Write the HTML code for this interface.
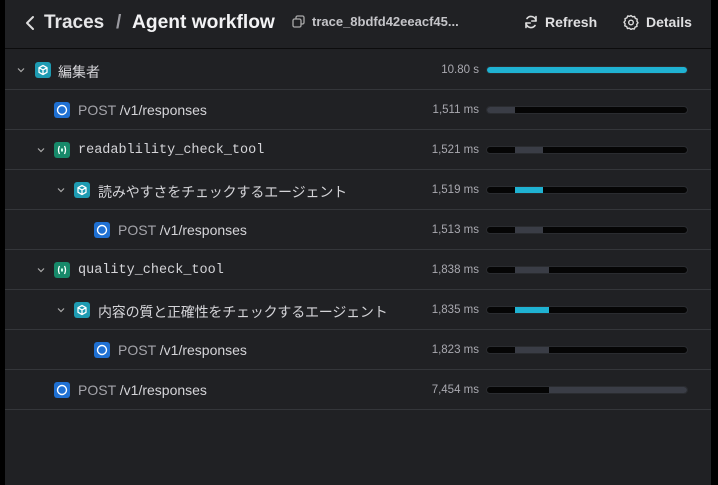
<!DOCTYPE html>
<html><head><meta charset="utf-8"><style>
*{margin:0;padding:0;box-sizing:border-box}
body{width:718px;height:485px;background:#000;overflow:hidden;font-family:"Liberation Sans","Noto Sans CJK JP",sans-serif;position:relative}
.panel{position:absolute;left:5px;top:0;width:706px;height:485px;background:#202124}
.hdr{position:absolute;left:0;top:0;width:706px;height:49px;border-bottom:1px solid #0c0c0d}
.abs{position:absolute;white-space:nowrap}
.row{position:absolute;left:0;width:706px;height:40px;border-bottom:1px solid #34363a}
.chev{position:absolute;top:15px;width:10px;height:10px}
.ic{position:absolute;top:12px;width:16px;height:16px;border-radius:3px}
.lbl{position:absolute;top:12px;font-size:14px;color:#d4d4d8;white-space:nowrap}
.mono{font-family:"Liberation Mono",monospace;font-size:13.5px;top:13px}
.dur{position:absolute;right:232px;top:14px;font-size:11.5px;color:#a9a9b0}
.bar{position:absolute;left:481px;top:16px;width:202px;height:8px;background:#050505;border-radius:4px;overflow:hidden;border:1px solid #2a2c30}
.seg{position:absolute;top:0;height:100%;background:#3a3d46}
.cy{background:#1fb2d2}
</style></head><body>
<div class="panel">
<div class="hdr">
 <svg class="abs" style="left:20px;top:15px" width="10" height="16" viewBox="0 0 10 16"><path d="M8 2L2 8l6 6" stroke="#ddd" stroke-width="2" fill="none" stroke-linecap="round" stroke-linejoin="round"/></svg>
 <div class="abs" style="left:39px;top:12px;font-size:19px;font-weight:bold;color:#e6e6e8">Traces</div>
 <div class="abs" style="left:111px;top:12px;font-size:19px;font-weight:bold;color:#9a9aa0">/</div>
 <div class="abs" style="left:127px;top:12px;font-size:19.2px;font-weight:bold;color:#f2f2f4">Agent workflow</div>
 <svg class="abs" style="left:287px;top:15px" width="13" height="13" viewBox="0 0 13 13"><rect x="1" y="4" width="8" height="8" rx="1.5" stroke="#aaa" stroke-width="1.3" fill="none"/><path d="M4 4V2.5A1.5 1.5 0 0 1 5.5 1h5A1.5 1.5 0 0 1 12 2.5v5A1.5 1.5 0 0 1 10.5 9H9" stroke="#aaa" stroke-width="1.3" fill="none"/></svg>
 <div class="abs" style="left:307px;top:14px;font-size:13px;font-weight:bold;color:#c4c4c8">trace_8bdfd42eeacf45...</div>
 <svg class="abs" style="left:519px;top:15px" width="14" height="14" viewBox="0 0 14 14"><path d="M12 6A5 5 0 0 0 3 3.5M2 8a5 5 0 0 0 9 2.5" stroke="#ddd" stroke-width="1.6" fill="none" stroke-linecap="round"/><path d="M12 1.5V6H7.8M2 12.5V8h4.2" stroke="#ddd" stroke-width="1.6" fill="none" stroke-linecap="round" stroke-linejoin="round"/></svg>
 <div class="abs" style="left:540px;top:14px;font-size:14px;font-weight:bold;color:#e0e0e2">Refresh</div>
 <svg class="abs" style="left:618px;top:14px" width="16" height="16" viewBox="0 0 16 16"><path d="M8 1.5l1.6 1.3 2-.3.7 1.9 1.9.8-.3 2L15 8.8l-1.3 1.6.3 2-1.9.7-.8 1.9-2-.3L8 15.5l-1.6-1.3-2 .3-.7-1.9-1.9-.8.3-2L1 8.2l1.3-1.6-.3-2 1.9-.7.8-1.9 2 .3z" stroke="#ddd" stroke-width="1.4" fill="none" stroke-linejoin="round"/><circle cx="8" cy="8.5" r="2.3" stroke="#ddd" stroke-width="1.4" fill="none"/></svg>
 <div class="abs" style="left:641px;top:14px;font-size:14px;font-weight:bold;color:#e0e0e2">Details</div>
</div>

<div class="row" style="top:50px">
 <svg class="chev" style="left:11px" viewBox="0 0 10 10"><path d="M2 3.5l3 3 3-3" stroke="#aaa" stroke-width="1.2" fill="none"/></svg>
 <div class="ic" style="left:30px;background:#1e9bb2"><svg width="16" height="16" viewBox="0 0 16 16"><path d="M8 3.5l4 2.2v4.6L8 12.5 4 10.3V5.7zM4 5.7l4 2.2 4-2.2M8 7.9v4.6" stroke="#fff" stroke-width="1.3" fill="none" stroke-linejoin="round"/></svg></div>
 <div class="lbl" style="left:53px">編集者</div>
 <div class="dur">10.80 s</div>
 <div class="bar"><div class="seg cy" style="left:0;width:100%"></div></div>
</div>
<div class="row" style="top:90px">
 <div class="ic" style="left:49px;background:#1f70d2"><svg width="16" height="16" viewBox="0 0 16 16"><circle cx="8" cy="8" r="4.5" stroke="#fff" stroke-width="1.4" fill="none"/></svg></div>
 <div class="lbl" style="left:73px"><span style="color:#a4a4aa">POST</span> /v1/responses</div>
 <div class="dur">1,511 ms</div>
 <div class="bar"><div class="seg" style="left:0;width:28px"></div></div>
</div>
<div class="row" style="top:130px">
 <svg class="chev" style="left:31px" viewBox="0 0 10 10"><path d="M2 3.5l3 3 3-3" stroke="#aaa" stroke-width="1.2" fill="none"/></svg>
 <div class="ic" style="left:49px;background:#17896a"><svg width="16" height="16" viewBox="0 0 16 16"><path d="M5.5 4Q3.5 8 5.5 12M10.5 4q2 4 0 8" stroke="#fff" stroke-width="1.3" fill="none"/><rect x="7" y="6.5" width="2" height="3" fill="#cfe"/></svg></div>
 <div class="lbl mono" style="left:73px">readablility_check_tool</div>
 <div class="dur">1,521 ms</div>
 <div class="bar"><div class="seg" style="left:28px;width:28px"></div></div>
</div>
<div class="row" style="top:170px">
 <svg class="chev" style="left:51px" viewBox="0 0 10 10"><path d="M2 3.5l3 3 3-3" stroke="#aaa" stroke-width="1.2" fill="none"/></svg>
 <div class="ic" style="left:69px;background:#1e9bb2"><svg width="16" height="16" viewBox="0 0 16 16"><path d="M8 3.5l4 2.2v4.6L8 12.5 4 10.3V5.7zM4 5.7l4 2.2 4-2.2M8 7.9v4.6" stroke="#fff" stroke-width="1.3" fill="none" stroke-linejoin="round"/></svg></div>
 <div class="lbl" style="left:93px;letter-spacing:-0.15px">読みやすさをチェックするエージェント</div>
 <div class="dur">1,519 ms</div>
 <div class="bar"><div class="seg cy" style="left:28px;width:28px"></div></div>
</div>
<div class="row" style="top:210px">
 <div class="ic" style="left:89px;background:#1f70d2"><svg width="16" height="16" viewBox="0 0 16 16"><circle cx="8" cy="8" r="4.5" stroke="#fff" stroke-width="1.4" fill="none"/></svg></div>
 <div class="lbl" style="left:113px"><span style="color:#a4a4aa">POST</span> /v1/responses</div>
 <div class="dur">1,513 ms</div>
 <div class="bar"><div class="seg" style="left:28px;width:28px"></div></div>
</div>
<div class="row" style="top:250px">
 <svg class="chev" style="left:31px" viewBox="0 0 10 10"><path d="M2 3.5l3 3 3-3" stroke="#aaa" stroke-width="1.2" fill="none"/></svg>
 <div class="ic" style="left:49px;background:#17896a"><svg width="16" height="16" viewBox="0 0 16 16"><path d="M5.5 4Q3.5 8 5.5 12M10.5 4q2 4 0 8" stroke="#fff" stroke-width="1.3" fill="none"/><rect x="7" y="6.5" width="2" height="3" fill="#cfe"/></svg></div>
 <div class="lbl mono" style="left:73px">quality_check_tool</div>
 <div class="dur">1,838 ms</div>
 <div class="bar"><div class="seg" style="left:28px;width:34px"></div></div>
</div>
<div class="row" style="top:290px">
 <svg class="chev" style="left:51px" viewBox="0 0 10 10"><path d="M2 3.5l3 3 3-3" stroke="#aaa" stroke-width="1.2" fill="none"/></svg>
 <div class="ic" style="left:69px;background:#1e9bb2"><svg width="16" height="16" viewBox="0 0 16 16"><path d="M8 3.5l4 2.2v4.6L8 12.5 4 10.3V5.7zM4 5.7l4 2.2 4-2.2M8 7.9v4.6" stroke="#fff" stroke-width="1.3" fill="none" stroke-linejoin="round"/></svg></div>
 <div class="lbl" style="left:93px;letter-spacing:-0.2px">内容の質と正確性をチェックするエージェント</div>
 <div class="dur">1,835 ms</div>
 <div class="bar"><div class="seg cy" style="left:28px;width:34px"></div></div>
</div>
<div class="row" style="top:330px">
 <div class="ic" style="left:89px;background:#1f70d2"><svg width="16" height="16" viewBox="0 0 16 16"><circle cx="8" cy="8" r="4.5" stroke="#fff" stroke-width="1.4" fill="none"/></svg></div>
 <div class="lbl" style="left:113px"><span style="color:#a4a4aa">POST</span> /v1/responses</div>
 <div class="dur">1,823 ms</div>
 <div class="bar"><div class="seg" style="left:28px;width:34px"></div></div>
</div>
<div class="row" style="top:370px">
 <div class="ic" style="left:49px;background:#1f70d2"><svg width="16" height="16" viewBox="0 0 16 16"><circle cx="8" cy="8" r="4.5" stroke="#fff" stroke-width="1.4" fill="none"/></svg></div>
 <div class="lbl" style="left:73px"><span style="color:#a4a4aa">POST</span> /v1/responses</div>
 <div class="dur">7,454 ms</div>
 <div class="bar"><div class="seg" style="left:62px;width:140px"></div></div>
</div>
</div>
</body></html>
